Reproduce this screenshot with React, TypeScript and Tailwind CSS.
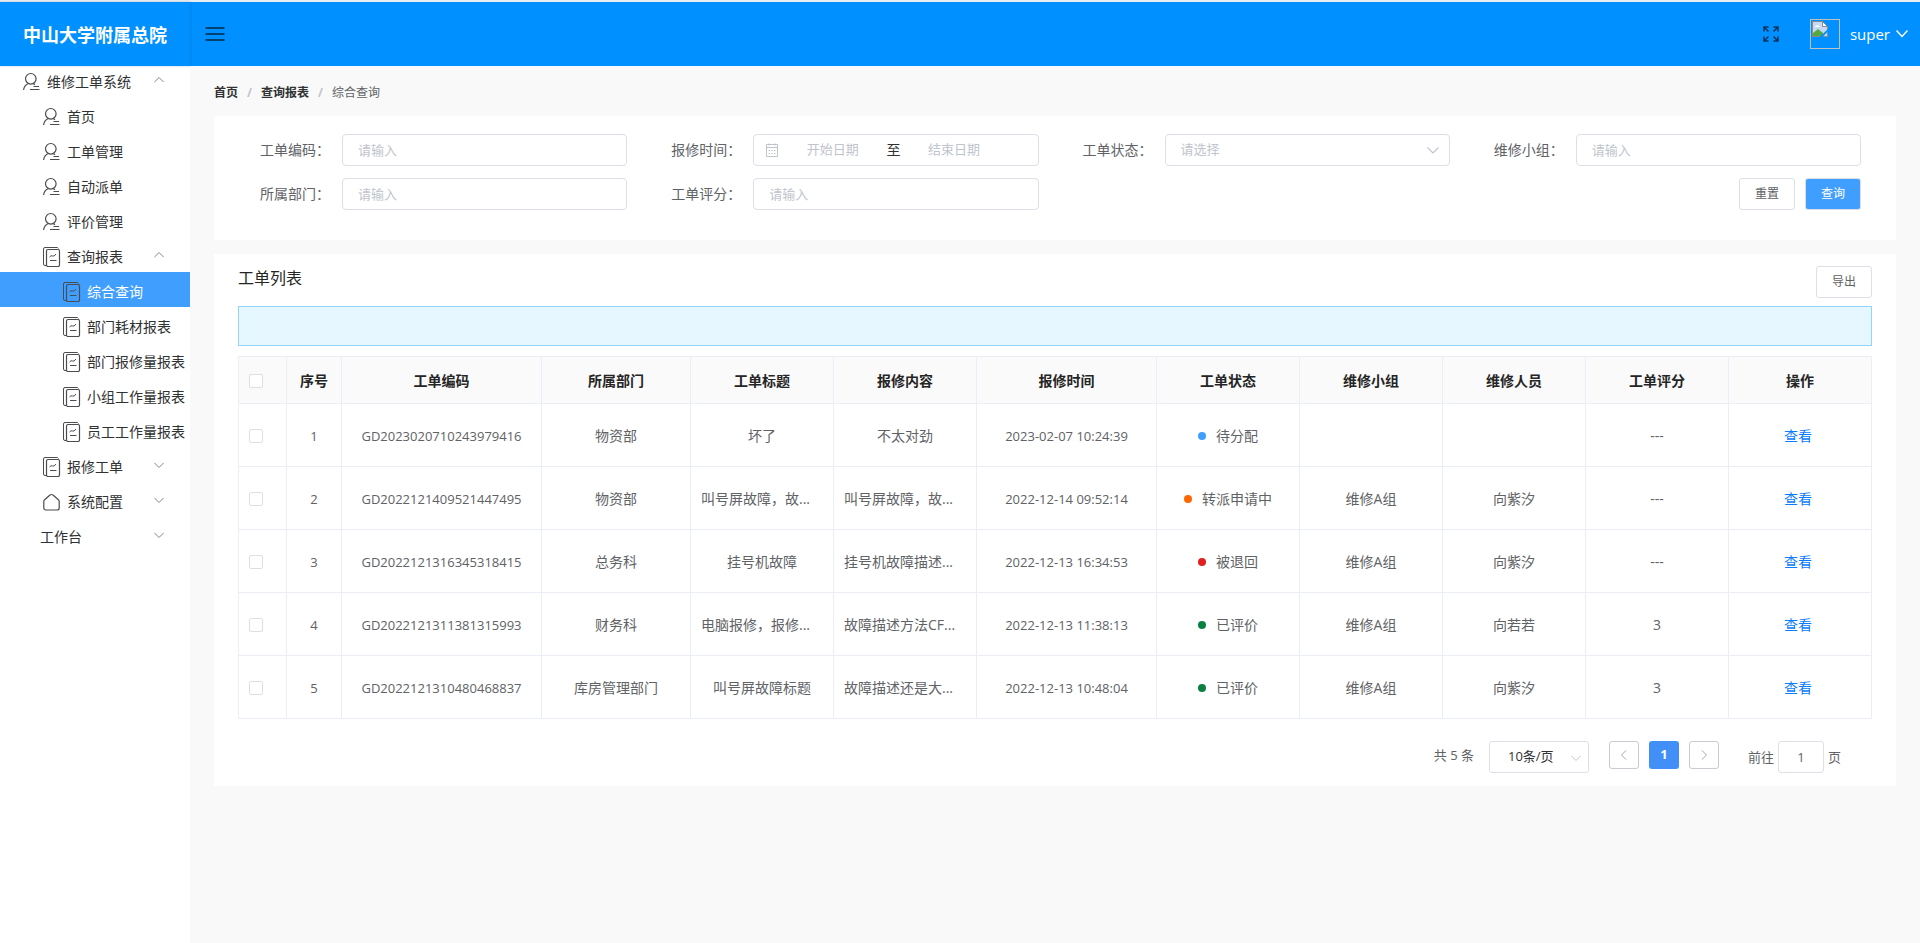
import type { ReactNode } from "react";

type IconName = "user" | "report" | "home";

interface MenuItem {
  label: string;
  level: 0 | 1 | 2;
  icon?: IconName;
  arrow?: "up" | "down";
  active?: boolean;
}

const menu: MenuItem[] = [
  { label: "维修工单系统", level: 0, icon: "user", arrow: "up" },
  { label: "首页", level: 1, icon: "user" },
  { label: "工单管理", level: 1, icon: "user" },
  { label: "自动派单", level: 1, icon: "user" },
  { label: "评价管理", level: 1, icon: "user" },
  { label: "查询报表", level: 1, icon: "report", arrow: "up" },
  { label: "综合查询", level: 2, icon: "report", active: true },
  { label: "部门耗材报表", level: 2, icon: "report" },
  { label: "部门报修量报表", level: 2, icon: "report" },
  { label: "小组工作量报表", level: 2, icon: "report" },
  { label: "员工工作量报表", level: 2, icon: "report" },
  { label: "报修工单", level: 1, icon: "report", arrow: "down" },
  { label: "系统配置", level: 1, icon: "home", arrow: "down" },
  { label: "工作台", level: 1, arrow: "down" },
];

const indent = { 0: "pl-[23px]", 1: "pl-[43px]", 2: "pl-[63px]" };

const columns = [
  { title: "序号", width: "w-[55px]" },
  { title: "工单编码", width: "w-[200px]" },
  { title: "所属部门", width: "w-[149px]" },
  { title: "工单标题", width: "" },
  { title: "报修内容", width: "" },
  { title: "报修时间", width: "w-[180px]" },
  { title: "工单状态", width: "" },
  { title: "维修小组", width: "" },
  { title: "维修人员", width: "" },
  { title: "工单评分", width: "" },
  { title: "操作", width: "" },
];

const statusColor: Record<string, string> = {
  待分配: "bg-[#409eff]",
  转派申请中: "bg-[#ff6600]",
  被退回: "bg-[#e02020]",
  已评价: "bg-[#0a8043]",
};

const orders = [
  { code: "GD2023020710243979416", dept: "物资部", title: "坏了", content: "不太对劲", time: "2023-02-07 10:24:39", status: "待分配", team: "", worker: "", score: "---" },
  { code: "GD2022121409521447495", dept: "物资部", title: "叫号屏故障，故...", content: "叫号屏故障，故...", time: "2022-12-14 09:52:14", status: "转派申请中", team: "维修A组", worker: "向紫汐", score: "---" },
  { code: "GD2022121316345318415", dept: "总务科", title: "挂号机故障", content: "挂号机故障描述...", time: "2022-12-13 16:34:53", status: "被退回", team: "维修A组", worker: "向紫汐", score: "---" },
  { code: "GD2022121311381315993", dept: "财务科", title: "电脑报修，报修...", content: "故障描述方法CF...", time: "2022-12-13 11:38:13", status: "已评价", team: "维修A组", worker: "向若若", score: "3" },
  { code: "GD2022121310480468837", dept: "库房管理部门", title: "叫号屏故障标题", content: "故障描述还是大...", time: "2022-12-13 10:48:04", status: "已评价", team: "维修A组", worker: "向紫汐", score: "3" },
];

function Chevron({ dir, className }: { dir: "up" | "down" | "left" | "right"; className: string }) {
  const d = {
    up: "M.5 8.5 6 3 11.5 8.5",
    down: "M.5 3.5 6 9 11.5 3.5",
    left: "M8.5 .5 3 6 8.500 11.5",
    right: "M3.5 .5 9 6 3.500 11.5",
  }[dir];
  return (
    <svg viewBox="0 0 12 12" fill="none" stroke="currentColor" strokeWidth="1.2" className={className}>
      <path d={d} />
    </svg>
  );
}

function MenuIcon({ name }: { name: IconName }) {
  return (
    <svg viewBox="0 0 18 20" fill="none" stroke="currentColor" className="h-5 w-[18px] shrink-0">
      {name === "user" && (
        <>
          <circle cx="7.8" cy="6.800" r="5.300" strokeWidth="1.2" />
          <path d="M5.3 11.500C2.500 12.800.9 15 .6 18M10.300 11.500l1.700 1.300" strokeWidth="1.2" />
          <path d="M10.500 14.500H16M7 17.500h9.500" strokeWidth="1.2" />
        </>
      )}
      {name === "report" && (
        <>
          <path d="M3 18.500H2A1.500 1.500 0 0 1 .5 17V2A1.500 1.500 0 0 1 2 .5h12.500l1 1" />
          <rect x="3.500" y="2.500" width="13" height="17" rx="1.500" strokeWidth="1.200" />
          <path d="M6.500 10q1.500-2 3-1t3.500-2M7 13.500h6.500" />
        </>
      )}
      {name === "home" && (
        <path
          d="M.8 9.500Q.8 8.500 1.600 7.800L6.700 3.200Q8.500 1.800 10.300 3.200L15.400 7.800Q16.200 8.500 16.200 9.500V16a2 2 0 0 1-2 2H2.800a2 2 0 0 1-2-2z"
          strokeWidth="1.200"
        />
      )}
    </svg>
  );
}

function Field({ id, label, children }: { id: string; label: string; children: ReactNode }) {
  return (
    <div className="flex items-center">
      <label htmlFor={id} className="w-[82px] shrink-0 text-sm text-[#606266]">
        {label}：
      </label>
      <div className="relative h-8 min-w-0 flex-1">{children}</div>
    </div>
  );
}

function TextField({ id, label }: { id: string; label: string }) {
  return (
    <Field id={id} label={label}>
      <input
        id={id}
        type="text"
        placeholder="请输入"
        className="h-8 w-full rounded border border-[#dcdfe6] px-[15px] text-[13px] text-[#606266] placeholder:text-[#c0c4cc]"
      />
    </Field>
  );
}

function Sidebar() {
  return (
    <aside className="w-[190px] shrink-0 bg-white">
      <nav className="-mt-1">
        {menu.map((item) => (
          <a
            key={item.label}
            href="#"
            className={`flex h-[35px] items-center ${indent[item.level]} ${
              item.active ? "bg-[#409eff]" : ""
            }`}
          >
            {item.icon && (
              <span className="mr-1.5 pt-1 text-[#4a4c50]">
                <MenuIcon name={item.icon} />
              </span>
            )}
            <span
              className={`pt-1 text-sm whitespace-nowrap ${
                item.active ? "text-white" : "text-[#303133]"
              } ${item.icon ? "" : "-ml-[3px]"}`}
            >
              {item.label}
            </span>
            {item.arrow && (
              <Chevron dir={item.arrow} className="mr-[26px] ml-auto h-2.5 w-2.5 text-[#808388]" />
            )}
          </a>
        ))}
      </nav>
    </aside>
  );
}

function Header() {
  return (
    <header className="relative z-10 flex h-[66px] border-t-2 border-[#e8edf2] bg-[#0090ff]">
      <h1 className="flex w-[190px] items-center justify-center pt-0.5 text-lg font-bold text-white shadow-[0_0_2px_rgba(0,21,41,0.25)]">
        中山大学附属总院
      </h1>
      <div className="flex flex-1 items-center">
        <button type="button" aria-label="折叠菜单" className="ml-[15px] text-[#06406f]">
          <svg viewBox="0 0 20 16" fill="none" stroke="currentColor" strokeWidth="2" className="h-4 w-5">
            <path d="M.5 2h19M.5 8h19M.5 14h19" />
          </svg>
        </button>
        <button type="button" aria-label="全屏" className="ml-auto text-[#06335c]">
          <svg viewBox="0 0 16 16" fill="none" stroke="currentColor" strokeWidth="1.5" className="h-4 w-4">
            <path d="M1 5.500V1h4.500M1 1l4.500 4.500M10.500 1H15v4.500M15 1l-4.500 4.500M1 10.500V15h4.500M1 15l4.500-4.500M15 10.500V15h-4.500M15 15l-4.500-4.500" />
          </svg>
        </button>
        <div className="ml-[31px] h-[30px] w-[30px] border border-[#c0c0c0] p-px">
          <svg viewBox="0 0 16 16" className="h-4 w-4">
            <path d="M.5.5h10l5 5v10H.5z" fill="#c3d9f7" stroke="#8b8b8b" />
            <path d="M1 15v-3l5-4 5 4v3z" fill="#56a93c" />
            <path d="M3 6a1.5 1.5 0 0 1 2-1.500 2 2 0 0 1 3 1.500z" fill="#fff" />
            <path d="M10.500.5v5h5z" fill="#fff" stroke="#8b8b8b" />
            <path d="M7.500 16 16 8v2.500L10.500 16z" fill="#0090ff" />
          </svg>
        </div>
        <button type="button" className="mr-3 ml-2.5 flex items-center gap-1.5 text-[15px] text-white">
          super
          <svg viewBox="0 0 12 12" fill="none" stroke="currentColor" strokeWidth="1.5" className="h-3 w-3">
            <path d="M.5 2.500 6 8.500l5.500-6" />
          </svg>
        </button>
      </div>
    </header>
  );
}

function Breadcrumb() {
  return (
    <nav className="flex h-[50px] items-center gap-[9px] pt-1 text-xs text-[#606266]">
      <a href="#" className="font-bold text-[#303133]">首页</a>
      <span className="font-bold text-[#c0c4cc]">/</span>
      <a href="#" className="font-bold text-[#303133]">查询报表</a>
      <span className="font-bold text-[#c0c4cc]">/</span>
      <span>综合查询</span>
    </nav>
  );
}

function SearchForm() {
  return (
    <form className="bg-white pt-[18px] pr-[35px] pb-[30px] pl-[46px]">
      <div className="grid grid-cols-4 gap-x-11 gap-y-3">
        <TextField id="code" label="工单编码" />
        <Field id="start" label="报修时间">
          <div className="flex h-8 items-center rounded border border-[#dcdfe6] pr-[30px] pl-[11px]">
            <svg viewBox="0 0 14 14" fill="none" stroke="currentColor" className="h-3.5 w-3.5 shrink-0 text-[#c0c4cc]">
              <path d="M1.500 1.500h11v12h-11zM1.500 4.500h11M4 .5v2M10 .5v2M3.500 7.500h1.500M6.300 7.500h1.500M9 7.500h1.500M3.500 10.500h1.500M6.300 10.500h1.500M9 10.500h1.500" />
            </svg>
            <input
              id="start"
              type="text"
              placeholder="开始日期"
              className="min-w-0 flex-1 text-center text-[13px] placeholder:text-[#c0c4cc]"
            />
            <span className="text-sm text-[#303133]">至</span>
            <input
              type="text"
              aria-label="结束日期"
              placeholder="结束日期"
              className="min-w-0 flex-1 text-center text-[13px] placeholder:text-[#c0c4cc]"
            />
          </div>
        </Field>
        <Field id="status" label="工单状态">
          <select
            id="status"
            className="h-8 w-full appearance-none rounded border border-[#dcdfe6] bg-white px-[15px] text-[13px] text-[#c0c4cc]"
          >
            <option>请选择</option>
          </select>
          <Chevron dir="down" className="pointer-events-none absolute top-2.5 right-[11px] h-3 w-3 text-[#c0c4cc]" />
        </Field>
        <TextField id="team" label="维修小组" />
        <TextField id="dept" label="所属部门" />
        <TextField id="score" label="工单评分" />
        <div className="col-span-2 flex justify-end gap-2.5">
          <button type="button" className="h-8 w-14 rounded-[3px] border border-[#dcdfe6] text-xs text-[#606266]">
            重置
          </button>
          <button type="button" className="h-8 w-14 rounded-[3px] border border-[#dcdfe6] bg-[#409eff] text-xs text-white">
            查询
          </button>
        </div>
      </div>
    </form>
  );
}

function Checkbox({ label }: { label: string }) {
  return (
    <input
      type="checkbox"
      aria-label={label}
      className="ml-2.5 block h-3.5 w-3.5 appearance-none rounded-xs border border-[#dcdfe6] bg-white"
    />
  );
}

function OrderTable() {
  return (
    <table className="mt-2.5 w-full table-fixed border-collapse text-center text-sm text-[#606266] [&_td]:border [&_td]:border-[#ebeef5] [&_td]:pt-0.5 [&_th]:border [&_th]:border-[#ebeef5] [&_th]:pt-0.5">
      <thead>
        <tr className="h-[47px] bg-[#fafafa] text-[#252525]">
          <th className="w-12">
            <Checkbox label="全选" />
          </th>
          {columns.map((col) => (
            <th key={col.title} className={`font-bold ${col.width}`}>
              {col.title}
            </th>
          ))}
        </tr>
      </thead>
      <tbody>
        {orders.map((order, i) => (
          <tr key={order.code} className="h-[63px]">
            <td>
              <Checkbox label={order.code} />
            </td>
            <td className="text-[13px]">{i + 1}</td>
            <td className="text-[13px]">{order.code}</td>
            <td>{order.dept}</td>
            <td className={`px-2.5 whitespace-nowrap ${order.title.endsWith("...") ? "text-left" : ""}`}>
              {order.title}
            </td>
            <td className={`px-2.5 whitespace-nowrap ${order.content.endsWith("...") ? "text-left" : ""}`}>
              {order.content}
            </td>
            <td className="text-[13px]">{order.time}</td>
            <td>
              <span className="flex items-center justify-center gap-2.5">
                <i className={`h-2 w-2 rounded-full ${statusColor[order.status]}`} />
                {order.status}
              </span>
            </td>
            <td>{order.team}</td>
            <td>{order.worker}</td>
            <td>{order.score}</td>
            <td>
              <a href="#" className="mr-1 text-[#0a7cff]">
                查看
              </a>
            </td>
          </tr>
        ))}
      </tbody>
    </table>
  );
}

function Pagination() {
  return (
    <div className="flex items-start justify-end pt-[22px] pr-[31px] text-[13px] text-[#606266]">
      <span className="mr-[15px] leading-7">共 5 条</span>
      <div className="relative">
        <select
          aria-label="每页条数"
          className="h-8 w-[100px] appearance-none rounded-[3px] border border-[#dcdfe6] bg-white pl-[18px] text-[#303133]"
        >
          <option>10条/页</option>
        </select>
        <Chevron dir="down" className="pointer-events-none absolute top-3 right-2 h-2.5 w-2.5 text-[#c0c4cc]" />
      </div>
      <div className="ml-5 flex gap-2.5">
        <button type="button" aria-label="上一页" className="flex h-7 w-[30px] items-center justify-center rounded-[3px] border border-[#c8cbd2]">
          <Chevron dir="left" className="h-2.5 w-2.5 text-[#a4a8b0]" />
        </button>
        <button type="button" className="h-7 w-[30px] rounded-[3px] bg-[#4290f7] font-bold text-white">
          1
        </button>
        <button type="button" aria-label="下一页" className="flex h-7 w-[30px] items-center justify-center rounded-[3px] border border-[#c8cbd2]">
          <Chevron dir="right" className="h-2.5 w-2.5 text-[#a4a8b0]" />
        </button>
      </div>
      <label htmlFor="page" className="ml-[29px] leading-8">前往</label>
      <input
        id="page"
        type="text"
        defaultValue="1"
        className="mx-1 h-8 w-[46px] rounded-[3px] border border-[#dcdfe6] text-center"
      />
      <span className="leading-8">页</span>
    </div>
  );
}

export default function App() {
  return (
    <div className="flex min-h-screen flex-col bg-[#f9f9f9] font-['Open_Sans','Noto_Sans_CJK_SC',sans-serif]">
      <Header />
      <div className="flex flex-1">
        <Sidebar />
        <main className="min-w-0 flex-1 px-6">
          <Breadcrumb />
          <SearchForm />
          <section className="mt-3.5 bg-white px-6 pt-3 pb-[13px]">
            <div className="flex items-start justify-between">
              <h2 className="text-base text-[#252525]">工单列表</h2>
              <button type="button" className="h-8 w-14 rounded-[3px] border border-[#dcdfe6] text-xs text-[#606266]">
                导出
              </button>
            </div>
            <div className="mt-2 h-10 border border-[#91d5ff] bg-[#e6f7ff]" />
            <OrderTable />
            <Pagination />
          </section>
        </main>
      </div>
    </div>
  );
}
